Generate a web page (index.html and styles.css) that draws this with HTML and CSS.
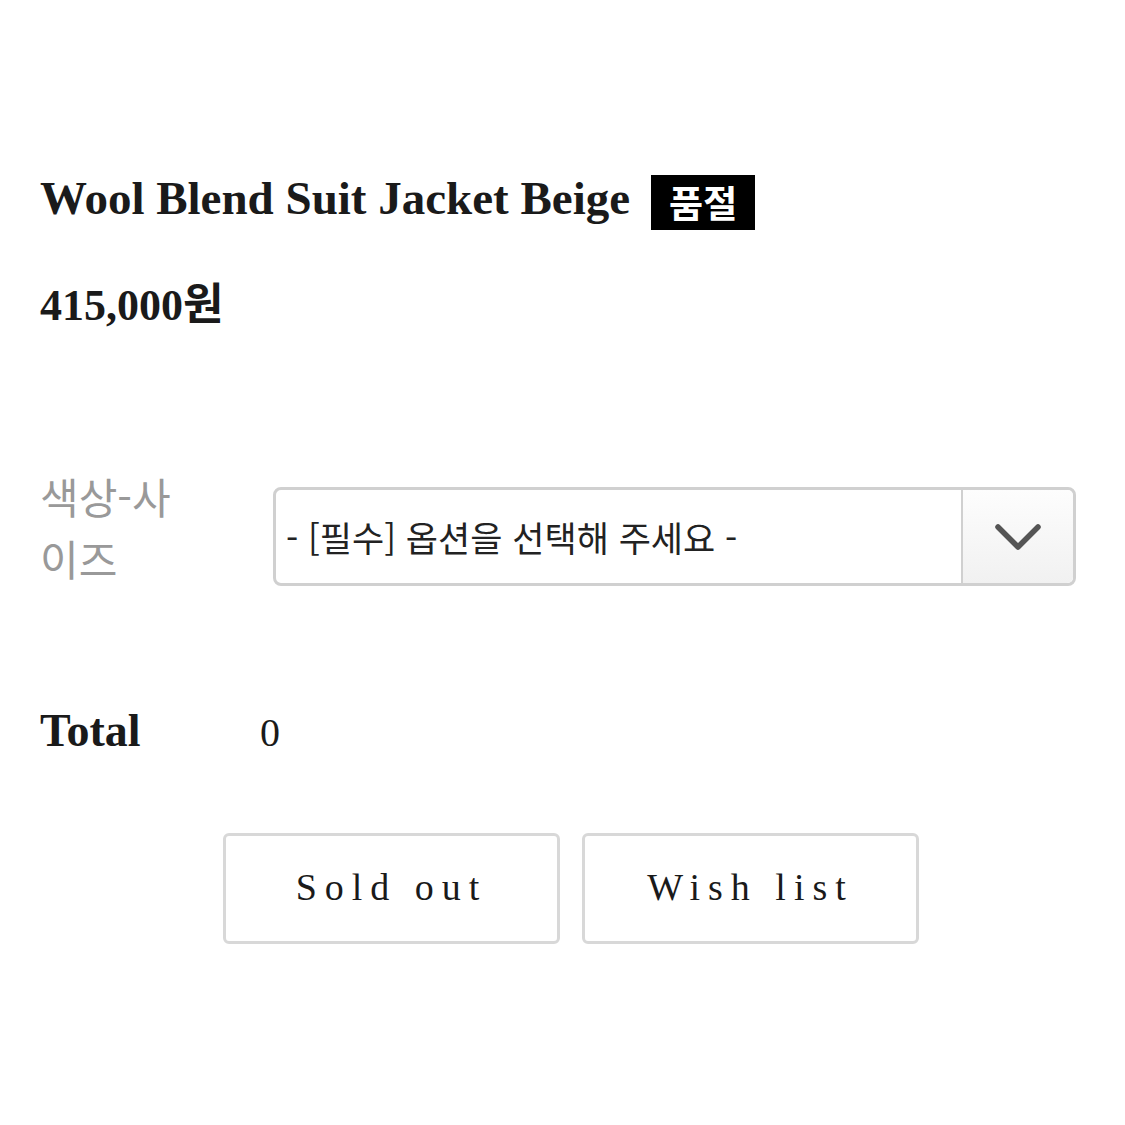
FILE: index.html
```html
<!DOCTYPE html>
<html lang="ko">
<head>
<meta charset="utf-8">
<link rel="stylesheet" href="styles.css">
</head>
<body>
<div class="product">
  <div class="title-row">
    <h1 class="title">Wool Blend Suit Jacket Beige</h1>
    <span class="badge">품절</span>
  </div>
  <div class="price">415,000원</div>
  <div class="option-row">
    <div class="option-label">색상-사이즈</div>
    <div class="select">
      <span class="select-text">- [필수] 옵션을 선택해 주세요 -</span>
      <span class="select-arrow">
        <svg width="46" height="28" viewBox="0 0 46 28"><path d="M3 4 L23 24 L43 4" fill="none" stroke="#555" stroke-width="5.5" stroke-linecap="round" stroke-linejoin="round"/></svg>
      </span>
    </div>
  </div>
  <div class="total-row">
    <span class="total-label">Total</span>
    <span class="total-value">0</span>
  </div>
  <div class="buttons">
    <button class="btn">Sold out</button>
    <button class="btn">Wish list</button>
  </div>
</div>
</body>
</html>
```
FILE: styles.css
```css
html, body {
  margin: 0;
  padding: 0;
  background: #fff;
}
body {
  font-family: "Liberation Serif", "Noto Sans CJK KR", serif;
  color: #1a1a1a;
}
.product {
  padding: 175px 49px 0 40px;
}
.title-row {
  display: flex;
  align-items: center;
  height: 55px;
}
.title {
  margin: -10px 0 0 0;
  font-size: 47px;
  font-weight: 700;
  letter-spacing: 0;
  color: #1a1a1a;
}
.badge {
  margin-left: 21px;
  background: #000;
  color: #fff;
  font-family: "Noto Sans CJK KR", sans-serif;
  font-size: 37px;
  font-weight: 700;
  height: 55px;
  width: 104px;
  display: flex;
  align-items: center;
  justify-content: center;
  line-height: 1;
}
.price {
  margin-top: 52px;
  font-size: 44px;
  font-weight: 700;
  line-height: 48px;
  font-family: "Liberation Serif", "Noto Sans CJK KR", serif;
}
.option-row {
  margin-top: 157px;
  display: flex;
  align-items: flex-start;
}
.option-label {
  width: 160px;
  margin-right: 73px;
  margin-top: -22px;
  font-family: "Noto Sans CJK KR", sans-serif;
  font-size: 42px;
  line-height: 62px;
  color: #999;
  font-weight: 400;
}
.select {
  flex: 1;
  height: 93px;
  border: 3px solid #d0d0d0;
  border-radius: 8px;
  display: flex;
  align-items: stretch;
  box-sizing: content-box;
}
.select-text {
  flex: 1;
  display: flex;
  align-items: center;
  padding-left: 10px;
  font-family: "Noto Sans CJK KR", sans-serif;
  font-size: 35px;
  color: #222;
}
.select-arrow {
  width: 110px;
  border-left: 2px solid #d0d0d0;
  background: linear-gradient(#fdfdfd, #f1f1f1);
  border-radius: 0 6px 6px 0;
  display: flex;
  align-items: center;
  justify-content: center;
}
.total-row {
  margin-top: 115px;
  display: flex;
  align-items: baseline;
}
.total-label {
  width: 220px;
  font-size: 46px;
  font-weight: 700;
}
.total-value {
  font-size: 40px;
}
.buttons {
  margin-top: 76px;
  padding-left: 183px;
  display: flex;
  gap: 22px;
}
.btn {
  width: 337px;
  height: 111px;
  background: #fff;
  border: 3px solid #d8d8d8;
  border-radius: 6px;
  font-family: "Liberation Serif", serif;
  font-size: 38px;
  letter-spacing: 8px;
  color: #1a1a1a;
  padding: 0 0 4px 0;
}
```
